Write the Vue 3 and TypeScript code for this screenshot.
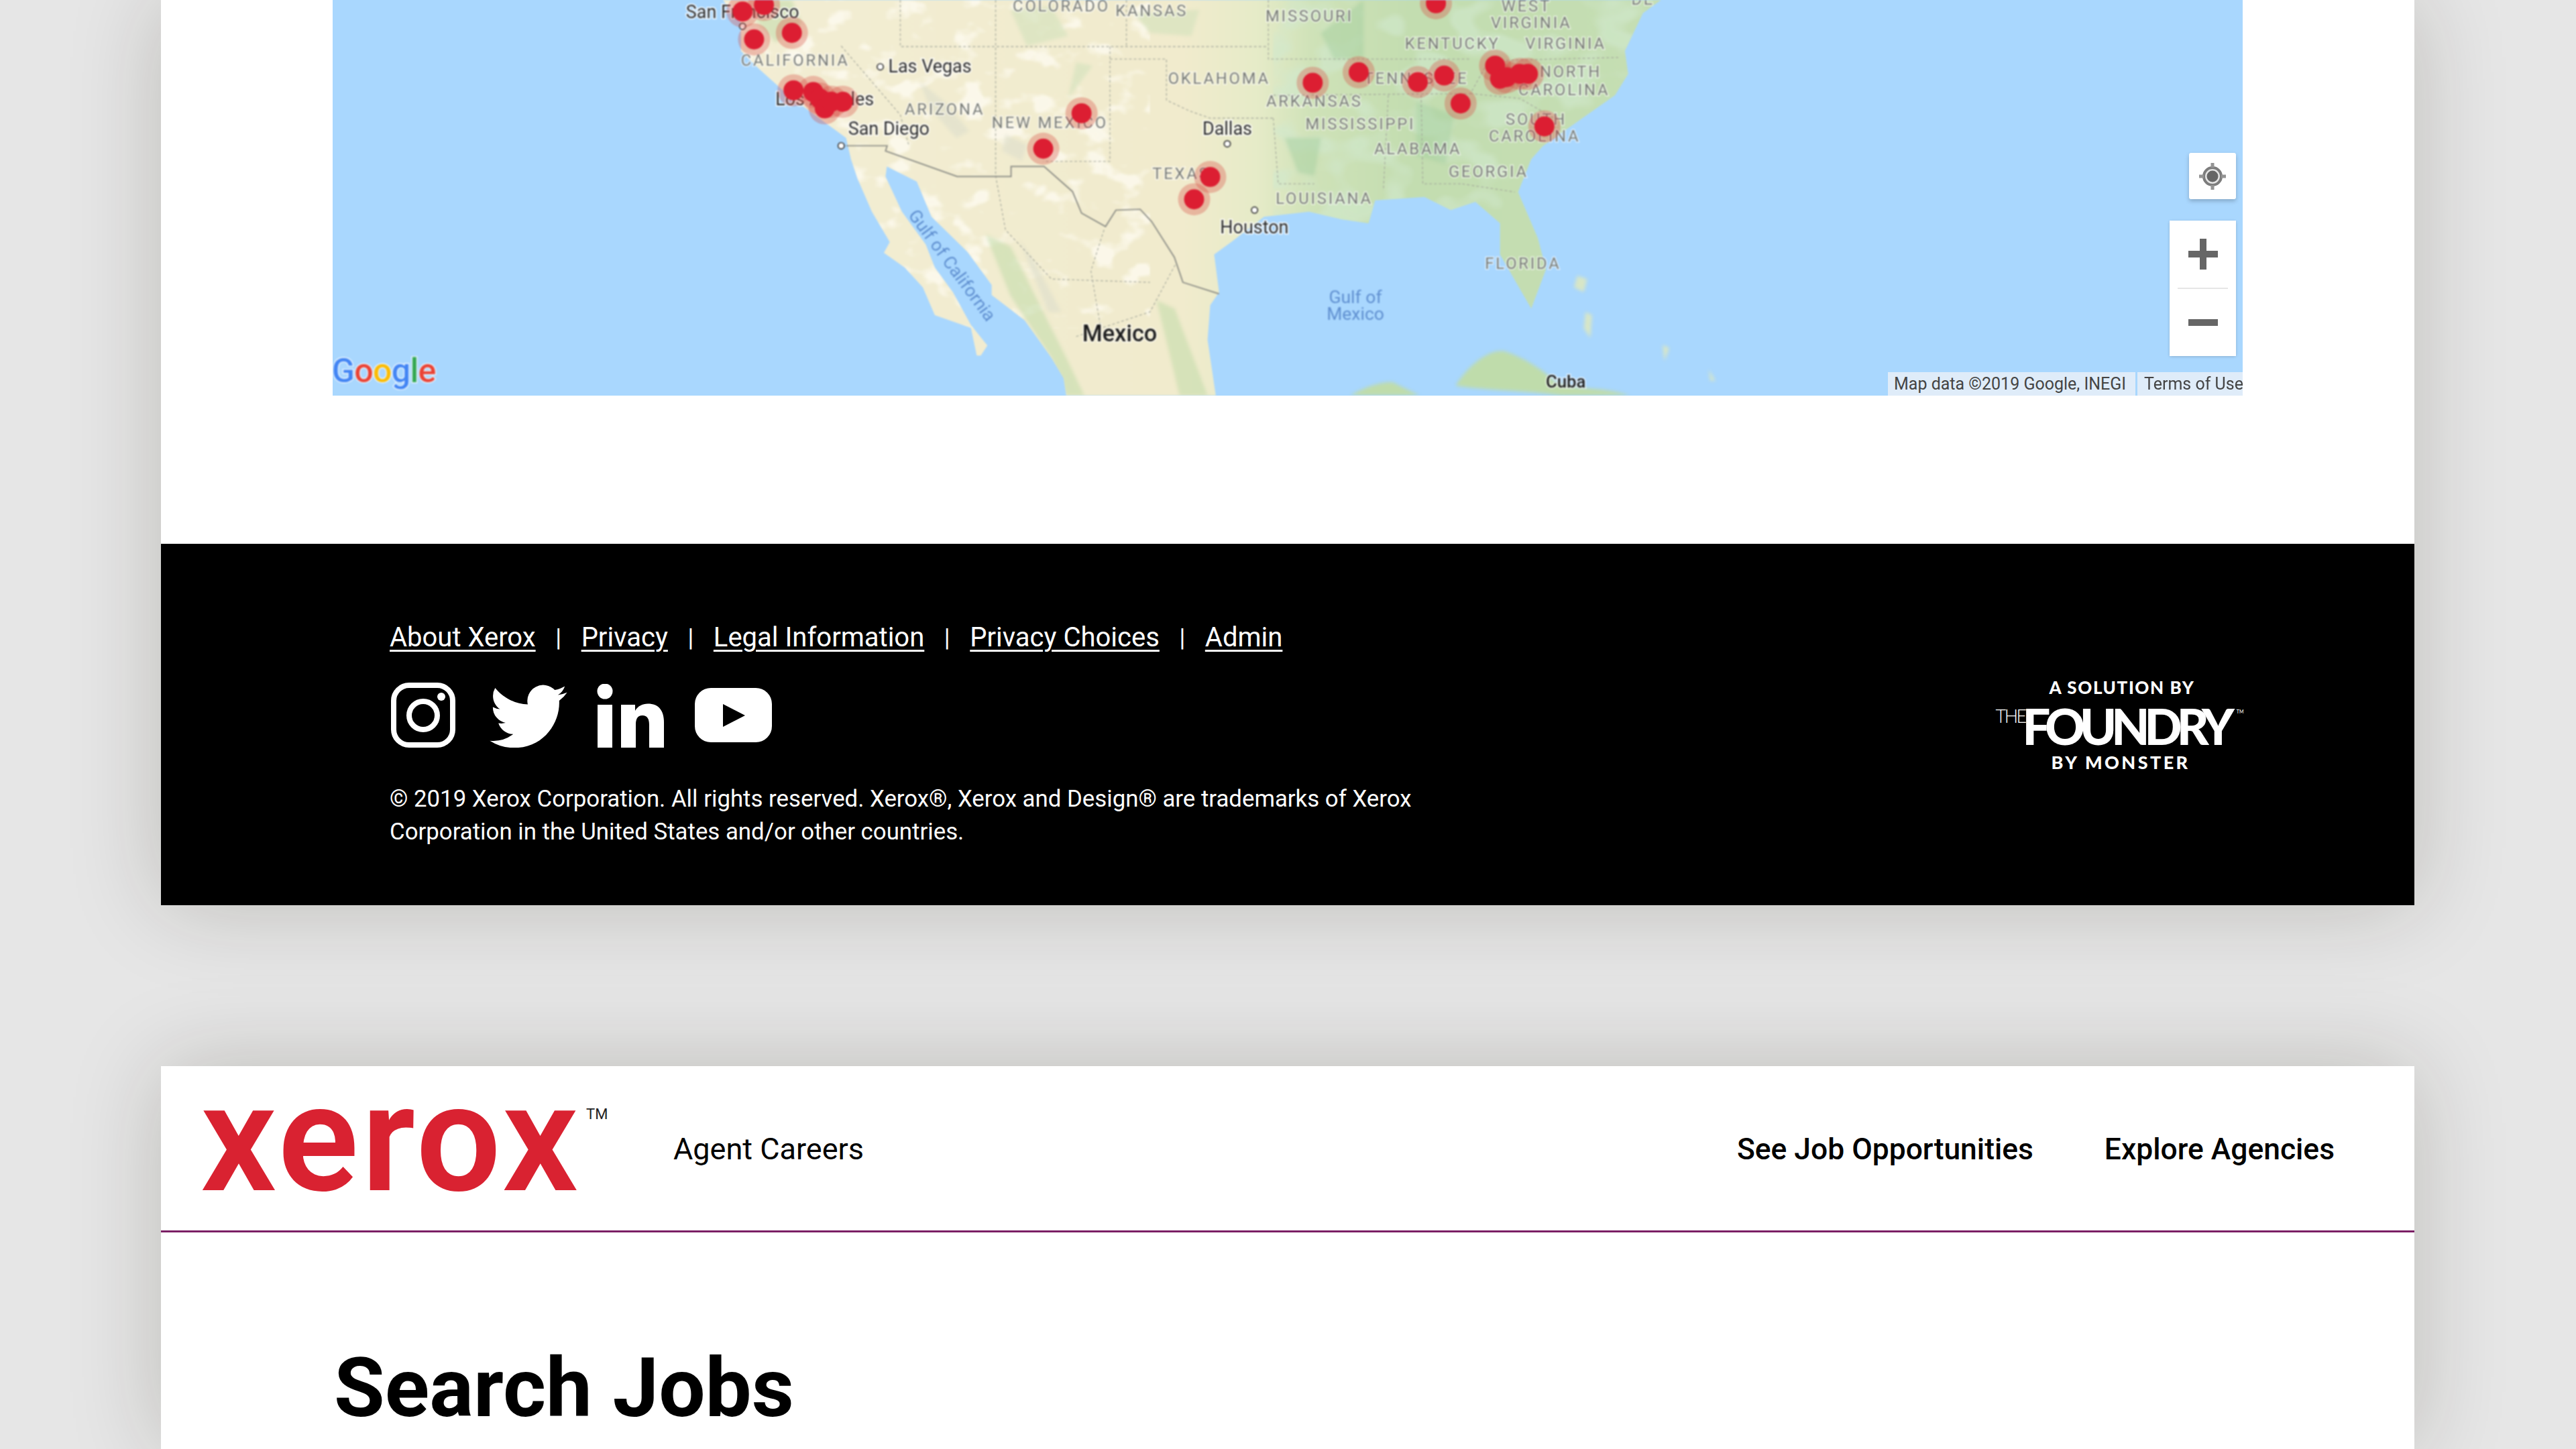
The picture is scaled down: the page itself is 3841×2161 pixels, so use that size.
<script setup lang="ts">
interface Label { t: string; x: number; y: number }
const states: Label[] = [
  { t: 'COLORADO', x: 646, y: 7 }, { t: 'KANSAS', x: 701, y: 10 }, { t: 'MISSOURI', x: 797, y: 13 },
  { t: 'WEST', x: 929, y: 7 }, { t: 'VIRGINIA', x: 932, y: 17 }, { t: 'KENTUCKY', x: 884, y: 30 },
  { t: 'VIRGINIA', x: 953, y: 30 }, { t: 'CALIFORNIA', x: 484, y: 40 }, { t: 'OKLAHOMA', x: 742, y: 51 },
  { t: 'TENNESSEE', x: 862, y: 51 }, { t: 'NORTH', x: 956, y: 47 }, { t: 'CAROLINA', x: 952, y: 58 },
  { t: 'ARKANSAS', x: 800, y: 65 }, { t: 'ARIZONA', x: 575, y: 70 }, { t: 'NEW MEXICO', x: 639, y: 78 },
  { t: 'MISSISSIPPI', x: 828, y: 79 }, { t: 'SOUTH', x: 935, y: 76 }, { t: 'CAROLINA', x: 934, y: 86 },
  { t: 'ALABAMA', x: 863, y: 94 }, { t: 'GEORGIA', x: 906, y: 108 }, { t: 'TEXAS', x: 719, y: 109 },
  { t: 'LOUISIANA', x: 806, y: 124 }, { t: 'FLORIDA', x: 927, y: 164 }, { t: 'DE', x: 1000, y: 3 },
]
const cities: Label[] = [
  { t: 'San Francisco', x: 452, y: 11 }, { t: 'Las Vegas', x: 566, y: 44 }, { t: 'Los Angeles', x: 502, y: 64 },
  { t: 'San Diego', x: 541, y: 82 }, { t: 'Dallas', x: 747, y: 82 }, { t: 'Houston', x: 763.5, y: 142 },
]
const dots = [[535.8, 40.7], [512, 88.8], [747, 87.6], [763.6, 128], [452, 16]]
const pins = [
  [452, 7], [465, 3], [482, 20], [459, 24], [483, 55], [495, 56], [499, 60], [502, 66], [506, 62], [513, 62],
  [658.3, 69], [635, 90.6], [736.6, 107.8], [726.8, 121.4], [799, 50.4], [827, 44], [863, 50], [879, 46], [889, 63], [874, 2],
  [910, 40], [913, 48], [917, 47], [925, 45], [930, 45], [940, 77],
]
const landPath = 'M440,0 L451,14 L451,31 L462,42 L481,59 L500,73 L515,84 L518,97 L522,109 L530.7,129 L541.6,147.5 L538,154 L550.7,163 L561.7,175 L569,192 L591,199.7 L594.5,216.6 L597,216.6 L601,210.5 L591,198 L580,178 L569,163 L563.5,149 L549,129 L539,107.5 L539.8,101.4 L558,110.6 L567,132 L589,153.6 L603.6,173.6 L603.6,179.7 L623.6,195 L640,218 L647.4,230.4 L649,241 L740,241 L735,207 L736.6,186 L742,178 L739,155 L749.4,147.5 L769.4,132 L796.8,129 L816.5,133.6 L833,136 L837,122 L867,120 L883,128 L898,123 L913,136 L913,155 L932,188 L941,164 L936,145 L924,117 L932,97 L939,89 L966,70 L983,58 L991,45 L989,31 L1000,8 L1011,0 Z'
const borderLine = '515,88.8 540,88.8 539,92 582.6,107.5 615.4,107.5 615.4,101.4 635.5,101.4 652.8,116.7 658.3,129.8 672.9,138 679.2,128 694,127.5 701,135 714.8,156.7 720,172 742,179'
const stateLines = [
  'M548,0 L548,28.4 L772,28.4', 'M606,0 L606,107', 'M685.6,0 L685.6,28.4', 'M675.6,28.4 L675.6,98.3 L635,98.3',
  'M675.6,36 L710,36 L710,61 L724,67.6 L736.6,72 L775,72', 'M772,0 L772,36 L895,36', 'M775,72 L778,112 L800,112',
  'M845,58 L842,116', 'M865,58 L866,112 L890,112', 'M775,58 L895,57 L906,37 L985,35', 'M895,57 L925,60 L946,72',
  'M512,28 L548,70 L553,88', 'M890,112 L922,117', 'M606,107 L612,140 L640,170 L700,172', 'M672,140 L664,165 L670,200', 'M655,205 L700,190 L716,160',
]
</script>

<template>
  <div class="page">
    <section class="card first">
      <div class="map-wrap">
        <div class="map">
          <svg class="map-svg" viewBox="202.5 0 1162.5 241" preserveAspectRatio="none" aria-label="Map">
            <defs>
              <linearGradient id="land" x1="440" x2="1000" y1="0" y2="0" gradientUnits="userSpaceOnUse">
                <stop offset="0" stop-color="#f3eed4" />
                <stop offset=".5" stop-color="#f1ebcd" />
                <stop offset=".58" stop-color="#e6ebc8" />
                <stop offset=".64" stop-color="#cfe2b8" />
                <stop offset=".75" stop-color="#c3ddb0" />
                <stop offset="1" stop-color="#c5deb3" />
              </linearGradient>
              <clipPath id="landClip"><path :d="landPath" /></clipPath>
              <filter id="soft" x="-5%" y="-5%" width="110%" height="110%"><feGaussianBlur stdDeviation="1" /></filter>
              <filter id="mottleLight" x="0" y="0" width="100%" height="100%">
                <feTurbulence type="fractalNoise" baseFrequency=".05 .07" numOctaves="3" seed="7" />
                <feColorMatrix values="0 0 0 0 1  0 0 0 0 .98  0 0 0 0 .91  7 0 0 0 -3.9" />
                <feGaussianBlur stdDeviation=".5" />
              </filter>
              <filter id="mottleGreen" x="0" y="0" width="100%" height="100%">
                <feTurbulence type="fractalNoise" baseFrequency=".035 .05" numOctaves="2" seed="12" />
                <feColorMatrix values="0 0 0 0 .64  0 0 0 0 .81  0 0 0 0 .62  7 0 0 0 -3.5" />
                <feGaussianBlur stdDeviation=".7" />
              </filter>
            </defs>
            <rect x="202" y="0" width="1164" height="241" fill="#a9d7fe" />
            <path fill="url(#land)" :d="landPath" />
            <g clip-path="url(#landClip)">
              <rect x="440" y="0" width="260" height="200" filter="url(#mottleLight)" opacity=".7" />
              <rect x="775" y="0" width="230" height="135" filter="url(#mottleGreen)" opacity=".6" />
              <g filter="url(#soft)">
                <path fill="#bcd9a6" opacity=".5" d="M600,143 L615,150 L650,220 L660,241 L649,241 L640,218 L615,180 Z M704,183 L715,188 L735,241 L718,241 Z M470,0 L460,12 L472,26 L488,14 L482,0 Z" />
                <path fill="#d5e3bd" opacity=".7" d="M615,6 L640,4 L650,22 L625,28 Z M655,38 L665,40 L650,60 Z M690,8 L730,6 L725,22 L700,20 Z" />
                <path fill="#a6cf9f" opacity=".5" d="M782,84 L804,84 L800,107 L790,105 Z M804,20 L830,0 L830,35 L812,36 Z M862,62 L885,70 L880,100 L862,95 Z" />
                <path fill="#dfe0cc" opacity=".7" d="M560,50 L575,62 L590,80 L582,84 L566,66 Z M612,82 L625,88 L622,98 L610,92 Z M620,145 L630,160 L646,190 L638,190 Z" />
              </g>
            </g>
            <g filter="url(#soft)">
              <path fill="#bfdcab" d="M886,235 C892,225 905,212 916,214 C928,218 940,226 946,232 C955,238 975,235 992,241 L950,241 C930,238 905,238 886,235 Z M822,241 C830,236 842,232 848,233 L864,241 Z" />
              <path fill="#d8e6c6" d="M960,168 L966,170 L964,178 L958,175 Z M965,190 L969,192 L968,206 L964,200 Z M1012,210 L1016,212 L1013,220 Z M1040,225 L1044,232 L1041,232 Z" />
            </g>
            <g fill="none" stroke="#a3a69a" stroke-width=".55" stroke-dasharray="1.6 1.3" opacity=".85">
              <path v-for="(d, i) in stateLines" :key="i" :d="d" />
            </g>
            <polyline :points="borderLine" fill="none" stroke="#909189" stroke-width=".8" />
            <circle v-for="(d, i) in dots" :key="'d' + i" :cx="d[0]" :cy="d[1]" r="1.9" fill="#fff" stroke="#333" stroke-width=".7" />
            <text v-for="(s, i) in states" :key="'s' + i" class="state" :x="s.x" :y="s.y" text-anchor="middle">{{ s.t }}</text>
            <text v-for="(c, i) in cities" :key="'c' + i" class="city" :x="c.x" :y="c.y" text-anchor="middle">{{ c.t }}</text>
            <text class="sea" x="825" y="184.5" text-anchor="middle">Gulf of</text>
            <text class="sea" x="825" y="195" text-anchor="middle">Mexico</text>
            <text class="sea" transform="translate(579 162) rotate(53.6) translate(0 3)" text-anchor="middle">Gulf of California</text>
            <text class="big" x="681.5" y="208" text-anchor="middle">Mexico</text>
            <text class="cuba" x="953" y="236" text-anchor="middle">Cuba</text>
            <g>
              <circle v-for="(p, i) in pins" :key="'h' + i" :cx="p[0]" :cy="p[1]" r="9.8" fill="#d8483f" opacity=".32" />
              <circle v-for="(p, i) in pins" :key="'p' + i" :cx="p[0]" :cy="p[1]" r="6.1" fill="#dc1e32" />
            </g>
            <text class="google" x="202" y="233"><tspan fill="#4285f4">G</tspan><tspan fill="#ea4335">o</tspan><tspan fill="#fbbc05">o</tspan><tspan fill="#4285f4">g</tspan><tspan fill="#34a853">l</tspan><tspan fill="#ea4335">e</tspan></text>
          </svg>
          <button class="locate" aria-label="My location">
            <svg width="44" height="44" viewBox="0 0 44 44">
              <circle cx="22" cy="22" r="13" fill="#e3e3e3" stroke="#7c7c7c" stroke-width="4" />
              <circle cx="22" cy="22" r="8.5" fill="#666" />
              <path d="M22 2v7M22 35v7M2 22h7M35 22h7" stroke="#949494" stroke-width="5" />
            </svg>
          </button>
          <div class="zoom">
            <button class="zoom-btn" aria-label="Zoom in"><span class="plus"></span></button>
            <span class="zoom-rule"></span>
            <button class="zoom-btn" aria-label="Zoom out"><span class="minus"></span></button>
          </div>
          <div class="attrib">
            <span class="attr-a">Map data ©2019 Google, INEGI</span>
            <span class="attr-b">Terms of Use</span>
          </div>
        </div>
      </div>
      <footer class="footer">
        <div class="foot-left">
          <nav class="links">
            <a>About Xerox</a><span class="sep">|</span>
            <a>Privacy</a><span class="sep">|</span>
            <a>Legal Information</a><span class="sep">|</span>
            <a>Privacy Choices</a><span class="sep">|</span>
            <a>Admin</a>
          </nav>
          <div class="social">
            <svg class="ig" viewBox="0 0 96 97" aria-label="Instagram">
              <rect x="4" y="4" width="88" height="89" rx="23" fill="none" stroke="#fff" stroke-width="8" />
              <circle cx="48" cy="49" r="21" fill="none" stroke="#fff" stroke-width="8" />
              <circle cx="75" cy="21" r="6" fill="#fff" />
            </svg>
            <svg class="tw" viewBox="0 1.7 24 20" aria-label="Twitter">
              <path fill="#fff" d="M23.953 4.57a10 10 0 01-2.825.775 4.958 4.958 0 002.163-2.723c-.951.555-2.005.959-3.127 1.184a4.92 4.92 0 00-8.384 4.482C7.69 8.095 4.067 6.13 1.64 3.162a4.822 4.822 0 00-.666 2.475c0 1.71.87 3.213 2.188 4.096a4.904 4.904 0 01-2.228-.616v.06a4.923 4.923 0 003.946 4.827 4.996 4.996 0 01-2.212.085 4.936 4.936 0 004.604 3.417 9.867 9.867 0 01-6.102 2.105c-.39 0-.779-.023-1.17-.067a13.995 13.995 0 007.557 2.209c9.053 0 13.998-7.496 13.998-13.985 0-.21 0-.42-.015-.63A9.935 9.935 0 0024 4.59z" />
            </svg>
            <svg class="li" viewBox="0 0 100 95" aria-label="LinkedIn">
              <circle cx="12" cy="11" r="11.5" fill="#fff" />
              <rect x="1" y="31" width="22" height="64" fill="#fff" />
              <path fill="#fff" d="M36 31h21v9c4-7 11-10.5 19-10.5 16 0 24 10 24 28V95H78V61c0-9-3-14-10-14-8 0-10 6-10 14v34H36z" />
            </svg>
            <svg class="yt" viewBox="0 0 115 81" aria-label="YouTube">
              <rect width="115" height="81" rx="24" fill="#fff" />
              <path d="M42 24 75 41 42 58z" fill="#000" />
            </svg>
          </div>
          <p class="legal">© 2019 Xerox Corporation. All rights reserved. Xerox®, Xerox and Design® are trademarks of Xerox Corporation in the United States and/or other countries.</p>
        </div>
        <div class="foundry">
          <div class="f-top">A SOLUTION BY</div>
          <div class="f-main"><span class="f-the">THE</span><span class="f-name">FOUNDRY</span><span class="f-tm">TM</span></div>
          <div class="f-bottom">BY MONSTER</div>
        </div>
      </footer>
    </section>

    <section class="card second">
      <header class="head">
        <div class="logo"><span class="logo-word">xerox</span><span class="logo-tm">TM</span></div>
        <span class="agent">Agent Careers</span>
        <nav class="nav">
          <a>See Job Opportunities</a>
          <a>Explore Agencies</a>
        </nav>
      </header>
      <h1 class="title">Search Jobs</h1>
    </section>
  </div>
</template>

<style scoped>
.page {
  width: 3841px;
  height: 2161px;
  overflow: hidden;
  background: #e6e6e6;
  font-family: Roboto, "Liberation Sans", sans-serif;
  display: flex;
  flex-direction: column;
  gap: 240px;
  box-sizing: border-box;
  padding-left: 240px;
}
.card {
  width: 3360px;
  background: #fff;
  box-shadow: 0 0 130px rgba(30, 25, 5, 0.2);
  flex: none;
}
.first { height: 1350px; display: flex; flex-direction: column; }
.second { height: 571px; }
.map-wrap { height: 811px; padding: 0 256px; box-sizing: border-box; flex: none; }
.map { position: relative; height: 590px; overflow: hidden; background: #a9d7fe; }
.map-svg { display: block; width: 100%; height: 100%; filter: blur(1px); }
.state { font: 400 9.7px Roboto, sans-serif; letter-spacing: 1.15px; fill: #777a75; stroke: rgba(255,255,255,.6); stroke-width: 1.3px; paint-order: stroke; }
.city { font: 400 11px Roboto, sans-serif; fill: #2b2b2b; stroke: rgba(255,255,255,.8); stroke-width: 1.5px; paint-order: stroke; }
.sea { font: 400 10.8px Roboto, sans-serif; fill: #5f8fd0; }
.big { font: 500 14px Roboto, sans-serif; fill: #1c1c1c; stroke: rgba(255,255,255,.55); stroke-width: 1.5px; paint-order: stroke; }
.cuba { font: 500 10.5px Roboto, sans-serif; fill: #1c1c1c; stroke: rgba(255,255,255,.6); stroke-width: 1.5px; paint-order: stroke; }
.google { font: 500 20.5px Roboto, sans-serif; letter-spacing: -.3px; stroke: rgba(255,255,255,.75); stroke-width: 1.2px; paint-order: stroke; }
button { border: 0; padding: 0; background: #fff; display: flex; align-items: center; justify-content: center; }
.locate {
  position: absolute; left: 2768px; top: 228px; width: 70px; height: 69px;
  border-radius: 3px; box-shadow: 0 3px 6px rgba(0,0,0,.22);
}
.zoom {
  position: absolute; left: 2739px; top: 329px; width: 99px; height: 202px;
  background: #fff; border-radius: 3px; box-shadow: 0 1px 4px rgba(0,0,0,.18);
  display: flex; flex-direction: column; align-items: center;
}
.zoom-btn { flex: 1; width: 100%; }
.zoom-rule { width: 75px; height: 2px; background: #e6e6e6; flex: none; }
.plus, .minus { display: block; width: 44px; height: 10px; background: #666; position: relative; }
.plus::after { content: ""; position: absolute; left: 17px; top: -18px; width: 10px; height: 46px; background: #666; }
.attrib {
  position: absolute; right: 0; bottom: 0; height: 35px; display: flex; gap: 3px;
  font-size: 25px; color: #444; line-height: 35px; white-space: nowrap;
}
.attr-a, .attr-b { background: #dfecf9; overflow: hidden; }
.attr-a { padding-left: 9px; width: 369px; box-sizing: border-box; }
.attr-b { width: 157px; padding-left: 10px; box-sizing: border-box; }
.footer {
  flex: 1; background: #000; color: #fff; display: flex; justify-content: space-between;
  padding: 0 256px 0 341px;
}
.foot-left { padding-top: 117px; }
.links { display: flex; align-items: center; font-size: 40px; line-height: 46px; height: 46px; }
.links a { text-decoration: underline; text-underline-offset: 5px; text-decoration-thickness: 3px; }
.sep { width: 68px; text-align: center; font-size: 36px; }
.social { display: flex; align-items: flex-start; margin-top: 44px; height: 98px; }
.social svg { display: block; flex: none; }
.ig { width: 96px; height: 97px; margin-left: 2px; }
.tw { width: 116px; height: 96px; margin: 1px 0 0 51px; }
.li { width: 100px; height: 95px; margin: 2px 0 0 44px; }
.yt { width: 115px; height: 81px; margin: 8px 0 0 46px; }
.legal { margin: 51px 0 0; width: 1540px; font-size: 34.8px; line-height: 49px; font-weight: 400; }
.foundry { width: 363px; padding-top: 204px; display: flex; flex-direction: column; align-items: center; font-family: Lato, sans-serif; }
.f-top { font-size: 26px; font-weight: 900; letter-spacing: 1.6px; line-height: 20px; margin-left: 3px; white-space: nowrap; }
.f-main { display: flex; align-items: flex-start; height: 53px; margin-top: 21px; line-height: 53px; margin-left: -4px; }
.f-the { font-size: 27px; font-weight: 300; line-height: 24px; letter-spacing: -2.5px; width: 40px; }
.f-name { font-size: 74px; font-weight: 900; letter-spacing: -8px; line-height: 54px; }
.f-tm { font-size: 7px; line-height: 10px; margin-left: 11px; }
.f-bottom { font-size: 27px; font-weight: 900; letter-spacing: 3.4px; line-height: 23px; margin-top: 16px; margin-left: -1px; white-space: nowrap; }
.head {
  height: 245px; border-bottom: 3px solid #7b1f65; display: flex; align-items: center;
  color: #000;
}
.logo { position: relative; width: 668px; flex: none; height: 100%; }
.logo-word {
  position: absolute; left: 59px; top: -1px; font-size: 224px; line-height: 220px; font-weight: 600; color: #d92231;
  font-family: Roboto, sans-serif; letter-spacing: 4px;
}
.logo-tm { position: absolute; left: 634px; top: 60px; font-size: 22px; line-height: 24px; color: #222; }
.agent { font-size: 45px; margin: 2px 0 0 96px; }
.nav { margin-left: auto; display: flex; gap: 106px; padding: 2px 119px 0 0; font-size: 44.4px; font-weight: 500; }
.title { margin: 162px 0 0 258px; font-size: 123px; line-height: 140px; font-weight: 700; color: #000; }
</style>

<style>
body { margin: 0; }
</style>
